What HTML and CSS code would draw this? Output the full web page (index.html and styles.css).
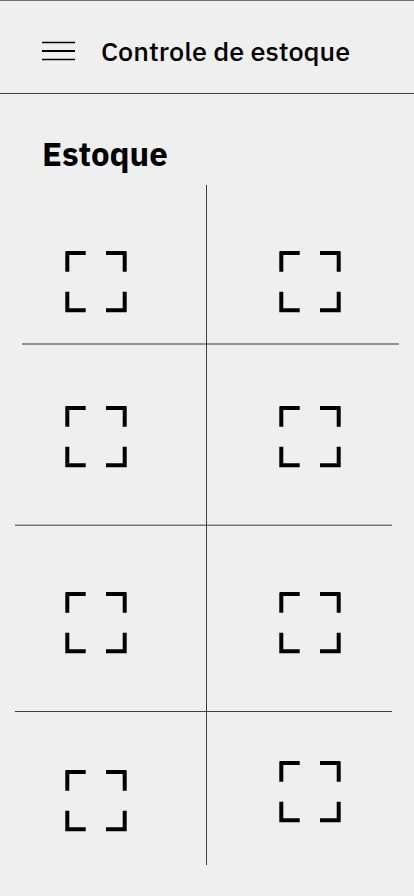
FILE: index.html
```html
<!DOCTYPE html>
<html lang="pt-BR">
<head>
<meta charset="utf-8">
<meta name="viewport" content="width=device-width, initial-scale=1">
<title>Controle de estoque</title>
<link rel="stylesheet" href="styles.css">
</head>
<body>
<svg class="defs" aria-hidden="true">
  <symbol id="frame" viewBox="0 0 62 62">
    <path d="M1 0H20.7V4H4.3V20.7H.3V.7ZM41 0H61L61.7 .7V20.7H57.7V4H41ZM.3 40.7H4.3V57.3H20.7V61.3H.3ZM57.7 40.7H61.7V61.3H41V57.3H57.7Z"/>
  </symbol>
</svg>
<header class="topbar">
  <button class="menu" type="button" aria-label="Menu">
    <svg class="menu-icon" viewBox="0 0 33 20"><path d="M0 1.5H33M0 18.5H33" stroke-width="1.3"/><path d="M0 10H33" stroke-width="1.8"/></svg>
  </button>
  <h1 class="title">Controle de estoque</h1>
</header>
<main>
  <h2 class="heading">Estoque</h2>
  <div class="board">
    <div class="row row-first">
      <div class="cell"><svg class="frame"><use href="#frame"/></svg></div>
      <div class="cell"><svg class="frame"><use href="#frame"/></svg></div>
    </div>
    <hr class="rule rule-right">
    <div class="row row-second">
      <div class="cell"><svg class="frame"><use href="#frame"/></svg></div>
      <div class="cell"><svg class="frame"><use href="#frame"/></svg></div>
    </div>
    <hr class="rule rule-middle">
    <div class="row row-third">
      <div class="cell"><svg class="frame"><use href="#frame"/></svg></div>
      <div class="cell"><svg class="frame"><use href="#frame"/></svg></div>
    </div>
    <hr class="rule rule-thin">
    <div class="row row-last">
      <div class="cell"><svg class="frame"><use href="#frame"/></svg></div>
      <div class="cell"><svg class="frame"><use href="#frame"/></svg></div>
    </div>
  </div>
</main>
</body>
</html>
```
FILE: styles.css
```css
* {
  box-sizing: border-box;
}

body {
  margin: 0;
  background: #efefef;
  color: #000;
  font-family: "IBM Plex Sans", Roboto, "Liberation Sans", sans-serif;
}

.defs {
  display: none;
}

.topbar {
  display: flex;
  align-items: center;
  gap: 26px;
  padding: 34px 42px 26px;
  border-top: 1px solid #717171;
  border-bottom: 1px solid #404040;
}

.menu {
  display: flex;
  padding: 0;
  border: 0;
  background: none;
}

.menu-icon {
  width: 33px;
  height: 20px;
  stroke: #000;
}

.title {
  margin: 0;
  font-size: 27px;
  font-weight: 500;
  line-height: 32px;
  white-space: nowrap;
}

.heading {
  margin: 0;
  padding: 40px 42px 11px;
  font-size: 33px;
  font-weight: 700;
  line-height: 40px;
}

.board {
  background: linear-gradient(#404040, #404040) calc(50% - 1px) 0 / 1px 100% no-repeat;
}

.row {
  display: grid;
  grid-template-columns: 1fr 1fr;
}

.cell {
  display: flex;
  justify-content: center;
  padding-right: 2px;
}

.cell:first-child {
  padding-right: 15px;
}

.frame {
  width: 62px;
  height: 62px;
}

.rule {
  height: 2px;
  margin: 0 22px 0 15px;
  border: 0;
  background: rgba(0, 0, 0, 0.38);
}

.rule-right {
  margin: 0 15px 0 22px;
}

.rule-middle {
  background: linear-gradient(rgba(0, 0, 0, 0.24) 50%, rgba(0, 0, 0, 0.52) 50%);
}

.rule-thin {
  height: 1px;
  background: #404040;
}

.row-first {
  padding: 66px 0 30px;
}

.row-second {
  padding: 61px 0 56px;
}

.row-third {
  padding: 66px 0 57px;
}

.row-last {
  padding: 49px 0 33px;
}

.row-last .cell:first-child {
  padding-top: 9px;
}
```
